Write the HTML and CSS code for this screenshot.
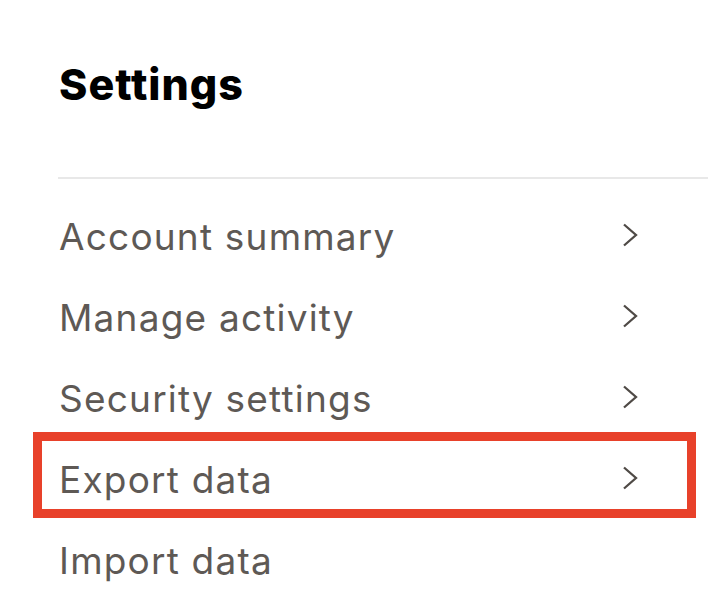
FILE: index.html
```html
<!DOCTYPE html>
<html lang="en">
<head>
<meta charset="utf-8">
<title>Settings</title>
<link rel="stylesheet" href="styles.css">
</head>
<body>
<main class="settings">
  <h1 class="settings-title">Settings</h1>
  <hr class="settings-divider">
  <ul class="settings-list">
    <li class="settings-item">
      <span class="settings-label">Account summary</span>
      <svg class="chevron" width="16" height="24" viewBox="0 0 16 24" aria-hidden="true"><path d="M2 1.5 L14 12 L2 22.5"/></svg>
    </li>
    <li class="settings-item">
      <span class="settings-label">Manage activity</span>
      <svg class="chevron" width="16" height="24" viewBox="0 0 16 24" aria-hidden="true"><path d="M2 1.5 L14 12 L2 22.5"/></svg>
    </li>
    <li class="settings-item">
      <span class="settings-label">Security settings</span>
      <svg class="chevron" width="16" height="24" viewBox="0 0 16 24" aria-hidden="true"><path d="M2 1.5 L14 12 L2 22.5"/></svg>
    </li>
    <li class="settings-item is-highlighted">
      <span class="settings-label">Export data</span>
      <svg class="chevron" width="16" height="24" viewBox="0 0 16 24" aria-hidden="true"><path d="M2 1.5 L14 12 L2 22.5"/></svg>
      <span class="highlight-box" aria-hidden="true"></span>
    </li>
    <li class="settings-item">
      <span class="settings-label">Import data</span>
    </li>
  </ul>
</main>
</body>
</html>
```
FILE: styles.css
```css
html, body {
  margin: 0;
  padding: 0;
  background: #ffffff;
}

body {
  font-family: "Inter", "Roboto", sans-serif;
  overflow: hidden;
}

.settings {
  padding: 59px 0 0 58px;
}

.settings-title {
  margin: 0;
  font-size: 43px;
  line-height: 50px;
  font-weight: 800;
  letter-spacing: 1px;
  color: #000000;
  padding-left: 1px;
}

.settings-divider {
  margin: 68px 0 0 0;
  border: 0;
  height: 2px;
  background: #e8e8e8;
}

.settings-list {
  list-style: none;
  margin: 0;
  padding: 17px 0 0 0;
}

.settings-item {
  position: relative;
  display: flex;
  align-items: center;
  justify-content: space-between;
  height: 81px;
  padding-right: 70px;
}

.settings-label {
  font-size: 37px;
  line-height: 81px;
  font-weight: 400;
  letter-spacing: 1.2px;
  color: #5e5955;
  padding-left: 1px;
}

.chevron {
  display: block;
  margin-top: -3px;
  fill: none;
  stroke: #4f4a46;
  stroke-width: 2.3;
}

.highlight-box {
  position: absolute;
  top: -7px;
  right: 12px;
  bottom: 2px;
  left: -25px;
  border: 9px solid #e8412a;
  box-sizing: border-box;
  pointer-events: none;
}
```
